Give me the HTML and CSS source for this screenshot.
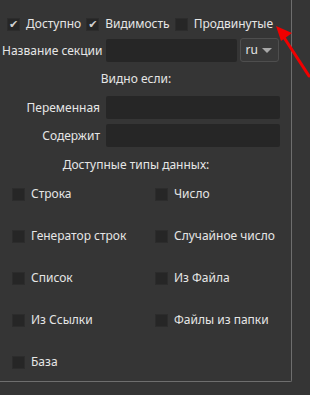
FILE: index.html
```html
<!DOCTYPE html>
<html lang="ru">
<head>
    <meta charset="UTF-8">
    <title>Секция</title>
    <link rel="stylesheet" href="styles.css">
</head>
<body>
    <div class="panel">
        <div class="top-row">
            <label class="check"><span class="box checked">✔</span>Доступно</label>
            <label class="check"><span class="box checked">✔</span>Видимость</label>
            <label class="check"><span class="box"></span>Продвинутые</label>
        </div>
        <div class="name-row">
            <span class="label">Название секции</span>
            <div class="field name-field"></div>
            <div class="combo">ru<span class="arrow"></span></div>
        </div>
        <div class="heading visible-heading">Видно если:</div>
        <div class="form-row">
            <span class="label right">Переменная</span>
            <div class="field"></div>
        </div>
        <div class="form-row second">
            <span class="label right">Содержит</span>
            <div class="field"></div>
        </div>
        <div class="heading types-heading">Доступные типы данных:</div>
        <div class="types">
            <label class="check"><span class="box"></span>Строка</label>
            <label class="check"><span class="box"></span>Число</label>
            <label class="check"><span class="box"></span>Генератор строк</label>
            <label class="check"><span class="box"></span>Случайное число</label>
            <label class="check"><span class="box"></span>Список</label>
            <label class="check"><span class="box"></span>Из Файла</label>
            <label class="check"><span class="box"></span>Из Ссылки</label>
            <label class="check"><span class="box"></span>Файлы из папки</label>
            <label class="check"><span class="box"></span>База</label>
        </div>
    </div>

    <!-- red annotation arrow -->
    <svg class="pointer" width="40" height="55" viewBox="0 0 40 55">
        <line x1="37" y1="52" x2="11" y2="12" stroke="#f00000" stroke-width="3" stroke-linecap="round"/>
        <polygon points="4,2 20,9 9,17" fill="#f00000"/>
    </svg>
</body>
</html>
```

FILE: styles.css
```css
body {
    margin: 0;
    background: #353535;
    font-family: "Noto Sans", sans-serif;
    font-size: 12px;
    color: #e6e6e6;
    width: 310px;
    height: 395px;
    overflow: hidden;
    position: relative;
}
.panel {
    width: 292px;
    height: 382px;
    box-sizing: border-box;
    border-right: 1px solid #6e6e6e;
    border-bottom: 1px solid #6e6e6e;
    border-bottom-right-radius: 2px;
}
.check { display: flex; align-items: center; gap: 6px; line-height: 16px; }
.box {
    width: 13px;
    height: 13px;
    background: #262626;
    border: 1px solid #2c2c2c;
    box-sizing: border-box;
    font-family: "DejaVu Sans", sans-serif;
    font-size: 11px;
    line-height: 11px;
    text-align: center;
    color: #d0d0d0;
    flex-shrink: 0;
}
.top-row {
    display: flex;
    gap: 5px;
    padding: 16px 0 0 7px;
}
.name-row {
    display: flex;
    align-items: center;
    margin-top: 6px;
    padding-left: 2px;
    height: 24px;
}
.label { white-space: nowrap; }
.field {
    height: 23px;
    background: #262626;
    border-radius: 2px;
}
.name-field { width: 131px; margin-left: 4px; }
.combo {
    width: 39px;
    height: 24px;
    box-sizing: border-box;
    margin-left: 3px;
    border: 1px solid #4e4e4e;
    border-radius: 3px;
    background: #393939;
    padding-left: 4px;
    line-height: 22px;
    display: flex;
    align-items: center;
    justify-content: space-between;
    padding-right: 6px;
}
.arrow {
    width: 0;
    height: 0;
    border-left: 5px solid transparent;
    border-right: 5px solid transparent;
    border-top: 5px solid #a8a8a8;
}
.heading { text-align: center; width: 272px; }
.visible-heading { margin-top: 8px; }
.form-row {
    display: flex;
    align-items: center;
    margin-top: 9px;
}
.form-row.second { margin-top: 5px; }
.form-row .right { width: 100px; text-align: right; }
.form-row .field { width: 174px; margin-left: 6px; }
.types-heading { margin-top: 9px; }
.types {
    display: grid;
    grid-template-columns: 143px 130px;
    row-gap: 26px;
    padding: 13px 0 0 12px;
}
.pointer {
    position: absolute;
    left: 272px;
    top: 24px;
}
```
